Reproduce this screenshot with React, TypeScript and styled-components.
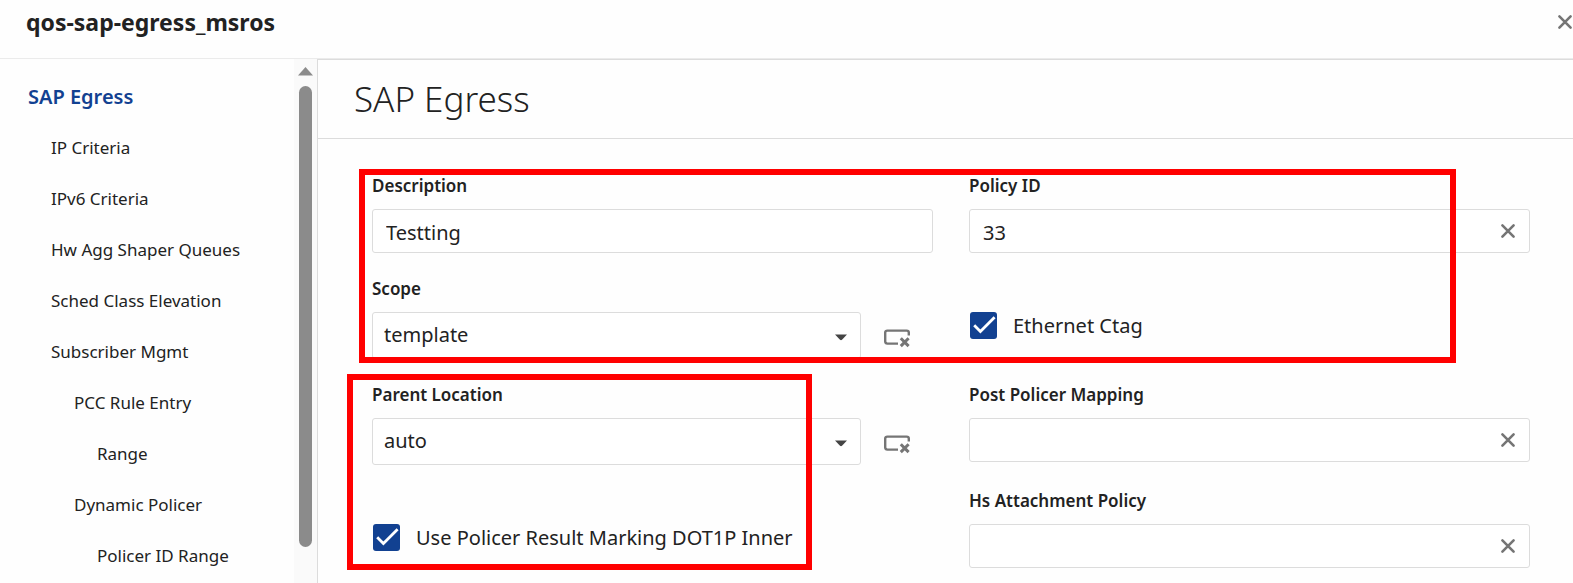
import React, { useId } from 'react';
import styled, { createGlobalStyle } from 'styled-components';

const GlobalStyle = createGlobalStyle`
  *, *::before, *::after { box-sizing: border-box; }
  body {
    margin: 0;
    background: #fefefe;
    color: #222;
    font-family: "Noto Sans", "Open Sans", sans-serif;
    font-size: 20px;
  }
`;

const Page = styled.div`
  display: flex;
  flex-direction: column;
  height: 100vh;
  overflow: hidden;
`;

const Header = styled.header`
  display: flex;
  flex: none;
  align-items: flex-start;
  justify-content: space-between;
  height: 59px;
  padding: 8px 0 0 26px;
  border-bottom: 1px solid #ebebeb;
`;

const PolicyName = styled.h2`
  margin: 0;
  font-size: 23px;
  line-height: 28px;
  font-weight: 700;
`;

const IconButton = styled.button`
  display: flex;
  align-items: center;
  justify-content: center;
  width: 16px;
  height: 28px;
  padding: 0;
  border: 0;
  background: none;
  color: #757575;
  cursor: pointer;
`;

const Body = styled.div`
  display: flex;
  flex: 1;
  min-height: 0;
`;

const Sidebar = styled.aside`
  display: flex;
  flex: none;
  width: 318px;
  border-right: 1px solid #dcdcdc;
`;

const Tree = styled.nav`
  flex: 1;
  overflow: hidden;
  padding-top: 12px;
`;

const TreeLink = styled.a<{ $level: number }>`
  display: block;
  padding-left: ${(p) => 28 + p.$level * 23}px;
  color: ${(p) => (p.$level === 0 ? '#124191' : '#222')};
  font-size: ${(p) => (p.$level === 0 ? 20 : 17)}px;
  font-weight: ${(p) => (p.$level === 0 ? 600 : 400)};
  line-height: 51px;
  text-decoration: none;
  white-space: nowrap;
`;

const ScrollTrack = styled.div`
  display: flex;
  flex-direction: column;
  align-items: center;
  gap: 10px;
  width: 23px;
  padding: 8px 0 36px;
  background: #fafafa;
`;

const ScrollThumb = styled.div`
  flex: 1;
  width: 13px;
  border-radius: 7px;
  background: #8b8b8b;
`;

const Main = styled.main`
  flex: 1;
  min-width: 0;
  border-top: 1px solid #dcdcdc;
`;

const TitleBar = styled.div`
  height: 79px;
  padding: 15px 36px;
  border-bottom: 1px solid #dcdcdc;
`;

const Title = styled.h1`
  margin: 0;
  font-size: 35px;
  font-weight: 300;
  line-height: 48px;
`;

const Form = styled.form`
  position: relative;
  display: grid;
  grid-template-columns: 1fr 1fr;
  gap: 24px 36px;
  padding: 35px 43px 24px 54px;
`;

const FieldBox = styled.div`
  display: flex;
  flex-direction: column;
  gap: 11px;
`;

const Label = styled.label`
  font-size: 17px;
  font-weight: 600;
  line-height: 24px;
`;

const InputShell = styled.div`
  display: flex;
  align-items: center;
  height: 44px;
  padding: 0 13px;
  border: 1px solid #dcdcdc;
  border-radius: 3px;
  background: #fff;
`;

const Input = styled.input`
  flex: 1;
  min-width: 0;
  height: 100%;
  padding: 2px 0 0;
  border: 0;
  outline: 0;
  background: none;
  color: inherit;
  font: inherit;
`;

const SelectRow = styled.div`
  display: flex;
  align-items: center;
  gap: 23px;
`;

const Stack = styled.div`
  display: grid;
  align-items: center;
  > * { grid-area: 1 / 1; }
  > svg { pointer-events: none; }
`;

const SelectStack = styled(Stack)`
  flex: 1;
  > svg { justify-self: end; margin: 2px 14px 0 0; }
`;

const Select = styled.select`
  appearance: none;
  width: 100%;
  height: 47px;
  padding: 0 36px 2px 11px;
  border: 1px solid #dcdcdc;
  border-radius: 3px;
  background: #fff;
  color: inherit;
  font: inherit;
`;

const ResetButton = styled(IconButton)`
  width: 26px;
  margin-right: 23px;
  padding-top: 4px;
`;

const CheckRow = styled.div`
  display: flex;
  align-items: center;
  gap: 16px;
  height: 27px;
  margin-top: 35px;
`;

const CheckInput = styled.input`
  appearance: none;
  width: 27px;
  height: 27px;
  margin: 0;
  border-radius: 3px;
  background: #124191;
`;

const CheckStack = styled(Stack)`
  margin-left: 1px;
`;

const CheckLabel = styled.label`
  line-height: 27px;
`;

const Highlight = styled.div`
  position: absolute;
  border: 6px solid #ff0000;
  pointer-events: none;
`;

const GeneralHighlight = styled(Highlight)`
  top: 30px;
  right: 117px;
  left: 41px;
  height: 194px;
`;

const ParentHighlight = styled(Highlight)`
  top: 235px;
  left: 29px;
  width: 465px;
  height: 196px;
`;

const CrossIcon = () => (
  <svg width="16" height="16" viewBox="0 0 16 16" fill="none" stroke="currentColor" strokeWidth="2.6" strokeLinecap="round" aria-hidden="true">
    <path d="M2.4 2.4 13.6 13.6M13.6 2.4 2.4 13.6" />
  </svg>
);

const CaretIcon = () => (
  <svg width="12" height="8" viewBox="0 0 12 8" aria-hidden="true">
    <path d="M0 1.4h12L7 6.7Q6 7.6 5 6.7Z" fill="#444" />
  </svg>
);

const ResetIcon = () => (
  <svg width="26" height="20" viewBox="0 0 26 20" fill="none" stroke="currentColor" aria-hidden="true">
    <path d="M14 15.6H3.4Q1.2 15.6 1.2 13.6V4.6Q1.2 2.6 3.4 2.6H22.6Q24.8 2.6 24.8 4.6V7.4" strokeWidth="2.4" />
    <path d="M16.8 10.3 24.6 18.1M24.6 10.3 16.8 18.1" strokeWidth="3" />
  </svg>
);

const TickIcon = () => (
  <svg width="27" height="27" viewBox="0 0 27 27" fill="none" stroke="#fff" strokeWidth="2.8" aria-hidden="true">
    <path d="M4.2 13.2 10.4 19.4 24.6 5.2" />
  </svg>
);

const ScrollUpIcon = () => (
  <svg width="15" height="9" viewBox="0 0 15 9" aria-hidden="true">
    <path d="M7.5 0 15 8.5H0Z" fill="#8b8b8b" />
  </svg>
);

interface TextFieldProps {
  label: string;
  value?: string;
  clearable?: boolean;
}

const TextField = ({ label, value = '', clearable = false }: TextFieldProps) => {
  const id = useId();
  return (
    <FieldBox>
      <Label htmlFor={id}>{label}</Label>
      <InputShell>
        <Input id={id} type="text" defaultValue={value} />
        {clearable && (
          <IconButton type="button" aria-label={`Clear ${label}`}>
            <CrossIcon />
          </IconButton>
        )}
      </InputShell>
    </FieldBox>
  );
};

const SelectField = ({ label, options }: { label: string; options: string[] }) => {
  const id = useId();
  return (
    <FieldBox>
      <Label htmlFor={id}>{label}</Label>
      <SelectRow>
        <SelectStack>
          <Select id={id}>
            {options.map((option) => (
              <option key={option}>{option}</option>
            ))}
          </Select>
          <CaretIcon />
        </SelectStack>
        <ResetButton type="button" aria-label={`Reset ${label}`}>
          <ResetIcon />
        </ResetButton>
      </SelectRow>
    </FieldBox>
  );
};

const CheckField = ({ label }: { label: string }) => {
  const id = useId();
  return (
    <CheckRow>
      <CheckStack>
        <CheckInput id={id} type="checkbox" defaultChecked />
        <TickIcon />
      </CheckStack>
      <CheckLabel htmlFor={id}>{label}</CheckLabel>
    </CheckRow>
  );
};

const treeItems = [
  { label: 'SAP Egress', level: 0 },
  { label: 'IP Criteria', level: 1 },
  { label: 'IPv6 Criteria', level: 1 },
  { label: 'Hw Agg Shaper Queues', level: 1 },
  { label: 'Sched Class Elevation', level: 1 },
  { label: 'Subscriber Mgmt', level: 1 },
  { label: 'PCC Rule Entry', level: 2 },
  { label: 'Range', level: 3 },
  { label: 'Dynamic Policer', level: 2 },
  { label: 'Policer ID Range', level: 3 },
];

export default function App() {
  return (
    <>
      <GlobalStyle />
      <Page>
        <Header>
          <PolicyName>qos-sap-egress_msros</PolicyName>
          <IconButton type="button" aria-label="Close">
            <CrossIcon />
          </IconButton>
        </Header>
        <Body>
          <Sidebar>
            <Tree>
              {treeItems.map((item) => (
                <TreeLink key={item.label} href="#" $level={item.level}>
                  {item.label}
                </TreeLink>
              ))}
            </Tree>
            <ScrollTrack>
              <ScrollUpIcon />
              <ScrollThumb />
            </ScrollTrack>
          </Sidebar>
          <Main>
            <TitleBar>
              <Title>SAP Egress</Title>
            </TitleBar>
            <Form>
              <TextField label="Description" value="Testting" />
              <TextField label="Policy ID" value="33" clearable />
              <SelectField label="Scope" options={['template', 'exclusive']} />
              <CheckField label="Ethernet Ctag" />
              <SelectField label="Parent Location" options={['auto', 'none']} />
              <TextField label="Post Policer Mapping" clearable />
              <CheckField label="Use Policer Result Marking DOT1P Inner" />
              <TextField label="Hs Attachment Policy" clearable />
              <GeneralHighlight />
              <ParentHighlight />
            </Form>
          </Main>
        </Body>
      </Page>
    </>
  );
}
